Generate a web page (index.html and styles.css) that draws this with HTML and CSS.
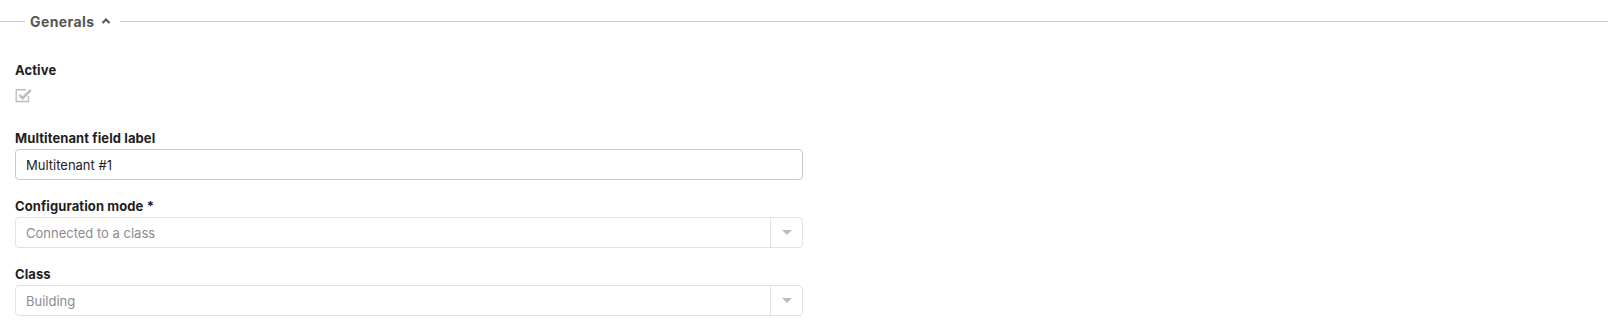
FILE: index.html
```html
<!DOCTYPE html>
<html>
<head>
<meta charset="utf-8">
<link rel="stylesheet" href="styles.css">
</head>
<body>
<section class="fieldset">
  <div class="legend">
    <span class="line line-left"></span>
    <span class="legend-title">Generals</span>
    <svg class="chevron" width="10" height="8" viewBox="0 0 10 8"><path d="M1.5 6 L5 2.5 L8.5 6" fill="none" stroke="#555" stroke-width="2"/></svg>
    <span class="line line-right"></span>
  </div>
  <div class="fields">
    <div class="field">
      <label class="label">Active</label>
      <div class="checkbox">
        <svg width="18" height="15" viewBox="0 0 18 15">
          <path d="M13.5 8 V13.5 H1.2 V1.8 H11" fill="none" stroke="#bdbdbd" stroke-width="1.4"/>
          <path d="M4.2 6.8 L7.6 10.2 L15.8 2" fill="none" stroke="#bdbdbd" stroke-width="2.6"/>
        </svg>
      </div>
    </div>
    <div class="field">
      <label class="label">Multitenant field label</label>
      <div class="input">Multitenant #1</div>
    </div>
    <div class="field">
      <label class="label">Configuration mode *</label>
      <div class="select">
        <span class="select-value">Connected to a class</span>
        <span class="select-arrow"><i class="caret"></i></span>
      </div>
    </div>
    <div class="field">
      <label class="label">Class</label>
      <div class="select">
        <span class="select-value">Building</span>
        <span class="select-arrow"><i class="caret"></i></span>
      </div>
    </div>
  </div>
</section>
</body>
</html>
```
FILE: styles.css
```css
html, body {
  margin: 0;
  padding: 0;
  background: #fff;
}
body {
  font-family: "Inter", "Open Sans", sans-serif;
  font-size: 13px;
  color: #1e1e1e;
}
.legend {
  display: flex;
  align-items: center;
  height: 42px;
}
.line {
  height: 1px;
  background: #c8c8c8;
}
.line-left {
  width: 25px;
}
.line-right {
  flex: 1;
  margin-left: 9px;
}
.legend-title {
  margin-left: 5px;
  font-weight: 700;
  color: #555;
  font-size: 14px;
  letter-spacing: 0.4px;
}
.chevron {
  margin-left: 7px;
}
.fields {
  padding-left: 15px;
  width: 788px;
  display: flex;
  flex-direction: column;
  padding-top: 19px;
}
.field {
  display: flex;
  flex-direction: column;
}
.label {
  font-weight: 700;
  font-size: 13px;
  line-height: 18px;
  height: 18px;
  margin-bottom: 2px;
  letter-spacing: 0.1px;
}
.checkbox {
  height: 24px;
  padding-top: 7px;
  margin-bottom: 17px;
}
.checkbox svg {
  display: block;
}
.input, .select {
  box-sizing: border-box;
  height: 31px;
  border: 1px solid #c9c9c9;
  border-radius: 4px;
  display: flex;
  align-items: center;
  margin-bottom: 17px;
}
.input {
  padding-left: 10px;
  color: #1e1e1e;
}
.select {
  border-color: #e2e2e2;
}
.select-value {
  flex: 1;
  padding-left: 10px;
  color: #8c8c8c;
}
.select-arrow {
  width: 31px;
  height: 100%;
  border-left: 1px solid #e2e2e2;
  display: flex;
  align-items: center;
  justify-content: center;
}
.caret {
  width: 0;
  height: 0;
  border-left: 5px solid transparent;
  border-right: 5px solid transparent;
  border-top: 5px solid #bdbdbd;
}
```
